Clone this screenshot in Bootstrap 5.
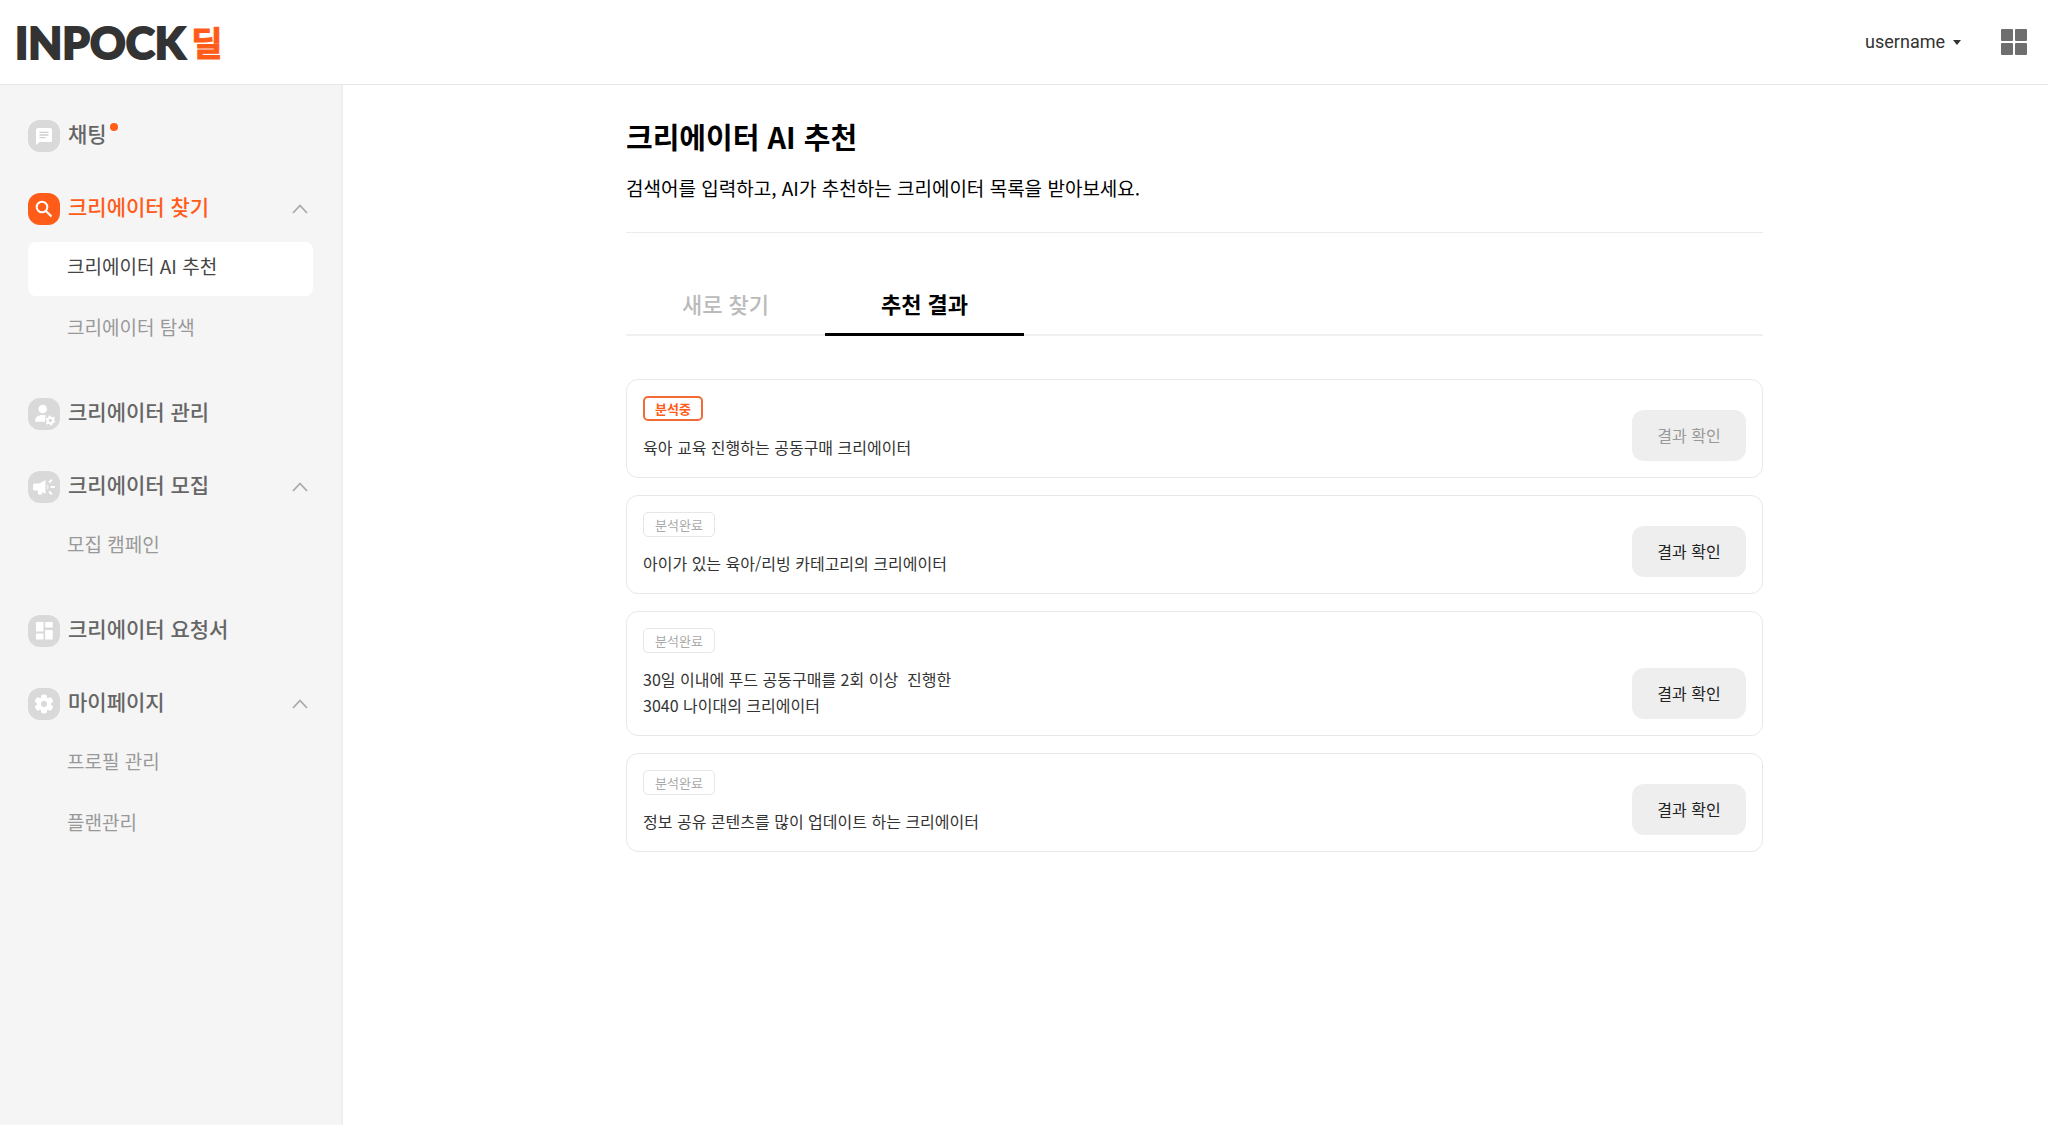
<!DOCTYPE html>
<html lang="ko">
<head>
<meta charset="utf-8">
<meta name="viewport" content="width=device-width, initial-scale=1">
<title>INPOCK 딜 - 크리에이터 AI 추천</title>
<link href="https://cdn.jsdelivr.net/npm/bootstrap@5.3.0/dist/css/bootstrap.min.css" rel="stylesheet">
<style>
  :root { --brand: #ff5c1a; --line: #ebebeb; }
  body { font-family: "Noto Sans CJK KR", sans-serif; color: #333; background: #fff; }
  a { text-decoration: none; color: inherit; }
  .topbar { height: 85px; padding: 0 21px 0 15px; border-bottom: 1px solid #e6e6e6; }
  .logo { gap: 6px; font-family: Lato, sans-serif; font-weight: 900; font-size: 44px; line-height: 56px; color: #333; -webkit-text-stroke: 2px #333; }
  .logo-deal { font-family: "Noto Sans CJK KR", sans-serif; font-size: 34px; line-height: 56px; font-weight: 700; color: var(--brand); -webkit-text-stroke: 1px var(--brand); }
  .user-btn { font-family: Roboto, "Noto Sans CJK KR", sans-serif; font-size: 18px; line-height: 28px; color: #333; }
  .side { width: 341px; padding: 35px 28px 40px 28px; background: #f5f5f5; box-shadow: 2px 0 0 #eee; }
  .side-groups { gap: 41px; }
  .side-head { height: 32px; gap: 8px; font-size: 21px; line-height: 32px; font-weight: 500; color: #666; }
  .side-head .label { padding-bottom: 6px; }
  .side-head.active { color: var(--brand); }
  .side-head .tile { width: 32px; height: 32px; flex: none; }
  .tile-bg { fill: #d9d9d9; }
  .active .tile-bg { fill: var(--brand); }
  .chev { margin-right: 5px; }
  .dot { width: 8px; height: 8px; background: var(--brand); margin: 3px 0 0 -5px; }
  .side-sub { margin-top: 17px; gap: 7px; }
  .side-sub a { height: 54px; padding: 0 0 6px 39px; border-radius: 8px; font-size: 19px; color: #999; }
  .side-sub a.current { background: #fff; color: #444; }
  .content-col { max-width: 1137px; padding-top: 29px; }
  .page-title { font-size: 29px; line-height: 44px; font-weight: 700; color: #000; }
  .page-desc { font-size: 19px; line-height: 28px; color: #000; padding-bottom: 30px; border-bottom: 1px solid var(--line); }
  .tabs { margin-top: 43px; border-bottom: 2px solid #f0f0f0; }
  .tabs .tab { width: 199px; height: 60px; margin-bottom: -2px; padding: 0 0 4px; font-size: 22px; line-height: 30px; font-weight: 500; color: #bbb; background: none; border: 0; border-bottom: 3px solid transparent; }
  .tabs .tab.active { color: #000; font-weight: 700; border-color: #000; }
  .results { margin-top: 43px; gap: 17px; }
  .result { padding: 16px; border: 1px solid #e8e8e8; border-radius: 12px; }
  .state { display: inline-flex; align-items: center; height: 25px; padding: 0 11px; border: 1px solid #e6e6e6; border-radius: 5px; font-size: 13px; line-height: 18px; font-weight: 400; color: #aaa; }
  .state.running { padding: 0 10px; border: 2px solid #f26a35; color: var(--brand); font-weight: 700; }
  .query { margin-top: 13px; padding-bottom: 1px; font-size: 16px; line-height: 26px; white-space: pre-wrap; color: #333; }
  .check-btn { width: 114px; height: 51px; padding: 0 0 2px; border: 0; border-radius: 12px; background: #eee; color: #222; font-size: 16px; }
  .check-btn:disabled { background: #eee; color: #999; opacity: 1; }
</style>
</head>
<body class="d-flex flex-column min-vh-100">
<header class="topbar d-flex align-items-center justify-content-between">
  <a href="#" class="logo d-flex align-items-center">INPOCK<span class="logo-deal">딜</span></a>
  <div class="d-flex align-items-center">
    <button type="button" class="user-btn btn p-0 border-0 d-flex align-items-center">username
      <svg class="ms-2" width="8" height="5" viewBox="0 0 8 5" aria-hidden="true"><path d="M0 0h8L4 5z" fill="#333"/></svg></button>
    <button type="button" class="btn p-0 border-0 d-flex ms-4" aria-label="앱 목록">
      <svg class="ms-2" width="34" height="26" viewBox="-8 0 34 26" fill="#6e6e6e"><rect width="12" height="12" rx="1"/><rect x="14" width="12" height="12" rx="1"/><rect y="14" width="12" height="12" rx="1"/><rect x="14" y="14" width="12" height="12" rx="1"/></svg></button>
  </div>
</header>
<div class="d-flex flex-grow-1">
  <nav class="side flex-shrink-0" aria-label="주 메뉴">
    <ul class="side-groups list-unstyled d-flex flex-column mb-0">
      <li>
        <a href="#" class="side-head d-flex align-items-center">
          <svg class="tile" viewBox="0 0 32 32"><rect class="tile-bg" width="32" height="32" rx="12"/><path fill="#fff" d="M10 8h12.500a1.500 1.500 0 0 1 1.500 1.500v11a1.500 1.500 0 0 1-1.500 1.500H11.500L8 25V10a2 2 0 0 1 2-2z"/><path d="M11.500 12.300h9M11.500 15h9M11.500 17.700h6" stroke="#d0d0d0" stroke-width="1.300"/></svg>
          <span class="label">채팅</span><span class="dot rounded-circle align-self-start"></span>
        </a>
      </li>
      <li>
        <a href="#" class="side-head active d-flex align-items-center">
          <svg class="tile" viewBox="0 0 32 32"><rect class="tile-bg" width="32" height="32" rx="12"/><circle cx="14" cy="14" r="5.300" fill="none" stroke="#fff" stroke-width="2"/><path d="M18 18l5.500 5.500" stroke="#fff" stroke-width="2.200"/></svg>
          <span class="label">크리에이터 찾기</span>
          <svg class="chev ms-auto" width="16" height="10" viewBox="0 0 16 10"><path d="M1 9l7-7.500L15 9" fill="none" stroke="#aaa" stroke-width="1.800"/></svg>
        </a>
        <div class="side-sub d-flex flex-column">
          <a href="#" class="current d-flex align-items-center" aria-current="page">크리에이터 AI 추천</a>
          <a href="#" class="d-flex align-items-center">크리에이터 탐색</a>
        </div>
      </li>
      <li>
        <a href="#" class="side-head d-flex align-items-center">
          <svg class="tile" viewBox="0 0 32 32"><rect class="tile-bg" width="32" height="32" rx="12"/><circle cx="14.700" cy="11" r="4.300" fill="#fff"/><path fill="#fff" d="M7 23.800c0-4.800 3-6.800 7.700-6.800 1.500 0 2.700.2 3.700.6-1.500 1.600-1.900 4-1 6.200z"/><circle cx="22.300" cy="22.500" r="2.700" fill="none" stroke="#fff" stroke-width="2"/><circle cx="22.300" cy="22.500" r="4.100" fill="none" stroke="#fff" stroke-width="1.700" stroke-dasharray="2.150 2.150"/></svg>
          <span class="label">크리에이터 관리</span>
        </a>
      </li>
      <li>
        <a href="#" class="side-head d-flex align-items-center">
          <svg class="tile" viewBox="0 0 32 32"><rect class="tile-bg" width="32" height="32" rx="12"/><path fill="#fff" d="M5 14a1.500 1.500 0 0 1 1.500-1.500H11l6.500-3.500v14L14 21v2.500h-4V19.500H6.500A1.500 1.500 0 0 1 5 18z"/><path d="M21 11.500l3-2.800M22.500 16H27M21 20.500l3 2.800" stroke="#fff" stroke-width="1.900"/><path d="M19 13.200a3.300 3.300 0 0 1 0 5.600z" fill="#f2f2f2"/></svg>
          <span class="label">크리에이터 모집</span>
          <svg class="chev ms-auto" width="16" height="10" viewBox="0 0 16 10"><path d="M1 9l7-7.500L15 9" fill="none" stroke="#aaa" stroke-width="1.800"/></svg>
        </a>
        <div class="side-sub d-flex flex-column">
          <a href="#" class="d-flex align-items-center">모집 캠페인</a>
        </div>
      </li>
      <li>
        <a href="#" class="side-head d-flex align-items-center">
          <svg class="tile" viewBox="0 0 32 32"><rect class="tile-bg" width="32" height="32" rx="12"/><path fill="#fff" d="M8 7h7.500v9.500H8zM17.200 7h7.500v5.500h-7.500zM8 18.500h7.500v6H8zM17.200 15h7.500v9.500h-7.500z"/></svg>
          <span class="label">크리에이터 요청서</span>
        </a>
      </li>
      <li>
        <a href="#" class="side-head d-flex align-items-center">
          <svg class="tile" viewBox="0 0 32 32"><rect class="tile-bg" width="32" height="32" rx="12"/><g fill="#fff"><circle cx="16" cy="16" r="7"/><rect x="13" y="6.500" width="6" height="19" rx="2"/><rect x="13" y="6.500" width="6" height="19" rx="2" transform="rotate(60 16 16)"/><rect x="13" y="6.500" width="6" height="19" rx="2" transform="rotate(120 16 16)"/></g><circle class="tile-bg" cx="16" cy="16" r="3"/></svg>
          <span class="label">마이페이지</span>
          <svg class="chev ms-auto" width="16" height="10" viewBox="0 0 16 10"><path d="M1 9l7-7.500L15 9" fill="none" stroke="#aaa" stroke-width="1.800"/></svg>
        </a>
        <div class="side-sub d-flex flex-column">
          <a href="#" class="d-flex align-items-center">프로필 관리</a>
          <a href="#" class="d-flex align-items-center">플랜관리</a>
        </div>
      </li>
    </ul>
  </nav>
  <main class="flex-grow-1">
    <div class="content-col mx-auto">
      <h1 class="page-title mb-0">크리에이터 AI 추천</h1>
      <p class="page-desc mt-3 mb-0">검색어를 입력하고, AI가 추천하는 크리에이터 목록을 받아보세요.</p>
      <div class="tabs d-flex" role="tablist">
        <button type="button" class="tab" role="tab" aria-selected="false">새로 찾기</button>
        <button type="button" class="tab active" role="tab" aria-selected="true">추천 결과</button>
      </div>
      <div class="results d-flex flex-column">
        <article class="result d-flex justify-content-between align-items-end">
          <div class="d-flex flex-column align-items-start"><span class="state running">분석중</span><p class="query mb-0">육아 교육 진행하는 공동구매 크리에이터</p></div>
          <button type="button" class="check-btn btn" disabled>결과 확인</button>
        </article>
        <article class="result d-flex justify-content-between align-items-end">
          <div class="d-flex flex-column align-items-start"><span class="state">분석완료</span><p class="query mb-0">아이가 있는 육아/리빙 카테고리의 크리에이터</p></div>
          <button type="button" class="check-btn btn">결과 확인</button>
        </article>
        <article class="result d-flex justify-content-between align-items-end">
          <div class="d-flex flex-column align-items-start"><span class="state">분석완료</span><p class="query mb-0">30일 이내에 푸드 공동구매를 2회 이상  진행한
3040 나이대의 크리에이터</p></div>
          <button type="button" class="check-btn btn">결과 확인</button>
        </article>
        <article class="result d-flex justify-content-between align-items-end">
          <div class="d-flex flex-column align-items-start"><span class="state">분석완료</span><p class="query mb-0">정보 공유 콘텐츠를 많이 업데이트 하는 크리에이터</p></div>
          <button type="button" class="check-btn btn">결과 확인</button>
        </article>
      </div>
    </div>
  </main>
</div>
<script src="https://cdn.jsdelivr.net/npm/bootstrap@5.3.0/dist/js/bootstrap.bundle.min.js"></script>
</body>
</html>
